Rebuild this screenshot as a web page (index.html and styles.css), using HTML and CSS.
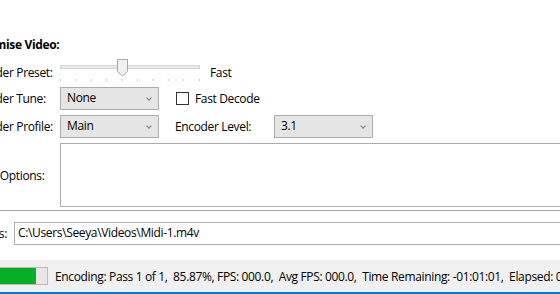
FILE: index.html
```html
<!DOCTYPE html>
<html lang="en">
<head>
   <meta charset="UTF-8">
   <meta name="viewport" content="width=device-width, initial-scale=1.0">
   <title>Video Encoder</title>
   <link rel="stylesheet" href="styles.css">
</head>
<body>
   <div class="window">
       <div class="panel">
           <h2 class="section-title">Optimise Video:</h2>

           <div class="row row-slider">
               <label class="field-label">Encoder Preset:</label>
               <svg class="slider" width="150" height="25" viewBox="0 0 150 25">
                   <rect x="0.5" y="7.5" width="139" height="3" fill="#e7eaea" stroke="#d6d6d6"/>
                   <g stroke="#c4c4c4">
                       <line x1="0.5" y1="21" x2="0.5" y2="23"/>
                       <line x1="15.9" y1="21" x2="15.9" y2="23"/>
                       <line x1="31.3" y1="21" x2="31.3" y2="23"/>
                       <line x1="46.7" y1="21" x2="46.7" y2="23"/>
                       <line x1="62.1" y1="21" x2="62.1" y2="23"/>
                       <line x1="77.5" y1="21" x2="77.5" y2="23"/>
                       <line x1="92.9" y1="21" x2="92.9" y2="23"/>
                       <line x1="108.3" y1="21" x2="108.3" y2="23"/>
                       <line x1="123.7" y1="21" x2="123.7" y2="23"/>
                       <line x1="139.5" y1="21" x2="139.5" y2="23"/>
                   </g>
                   <path d="M57.5 1.5 H67.5 V13.5 L62.5 18 L57.5 13.5 Z" fill="#f0f0f0" stroke="#a8a8a8"/>
               </svg>
               <span class="slider-value">Fast</span>
           </div>

           <div class="row">
               <label class="field-label">Encoder Tune:</label>
               <div class="combo">None</div>
               <label class="check">
                   <span class="check-box"></span>
                   Fast Decode
               </label>
           </div>

           <div class="row">
               <label class="field-label">Encoder Profile:</label>
               <div class="combo">Main</div>
               <label class="inline-label">Encoder Level:</label>
               <div class="combo">3.1</div>
           </div>

           <div class="row row-options">
               <label class="field-label">Extra Options:</label>
               <div class="textarea"></div>
           </div>
       </div>

       <div class="destination">
           <label class="dest-label">Save As:</label>
           <div class="textbox">C:\Users\Seeya\Videos\Midi-1.m4v</div>
       </div>

       <div class="status-bar">
           <div class="progress"><div class="progress-fill"></div></div>
           <span class="status-text">Encoding: Pass 1 of 1,&nbsp; 85.87%, FPS: 000.0,&nbsp; Avg FPS: 000.0,&nbsp; Time Remaining: -01:01:01,&nbsp; Elapsed: 00:00:01</span>
       </div>
   </div>
</body>
</html>
```

FILE: styles.css
```css
* {
    margin: 0;
    padding: 0;
    box-sizing: border-box;
}

body {
    font-family: "Open Sans", "Noto Sans", sans-serif;
    font-size: 12px;
    letter-spacing: -0.35px;
    color: #000;
    background: #fff;
    width: 560px;
    height: 294px;
    overflow: hidden;
}

.window {
    width: 620px;
    margin-left: -30px;
}

.panel {
    height: 211px;
    padding-top: 37px;
    border-bottom: 1px solid #a0a0a0;
    margin-left: 30px;
}

.section-title {
    font-size: 12px;
    font-weight: 700;
    line-height: 16px;
    margin-left: -30px;
    margin-bottom: 5px;
}

.row {
    display: flex;
    align-items: center;
    height: 23px;
    margin-left: -30px;
    margin-bottom: 5px;
}

.row-slider {
    height: 25px;
    margin-bottom: 4px;
    align-items: flex-start;
}

.row-slider .field-label,
.row-slider .slider-value {
    margin-top: 6px;
}

.field-label {
    width: 90px;
    flex-shrink: 0;
}

.slider {
    display: block;
}

.combo {
    width: 99px;
    height: 23px;
    padding: 2px 6px;
    background: #e5e5e5;
    border: 1px solid #acacac;
    line-height: 16px;
    position: relative;
}

.combo::after {
    content: "";
    position: absolute;
    right: 7px;
    top: 8px;
    width: 3px;
    height: 3px;
    border-right: 1px solid #808080;
    border-bottom: 1px solid #808080;
    transform: rotate(45deg);
}

.check {
    display: flex;
    align-items: center;
    margin-left: 17px;
    gap: 6px;
}

.check-box {
    width: 13px;
    height: 13px;
    border: 1px solid #333;
    background: #fff;
}

.inline-label {
    margin-left: 16px;
    width: 99px;
}

.row-options {
    height: 64px;
}

.row-options .textarea {
    flex: 1;
    height: 64px;
    border: 1px solid #abadb3;
    border-right: none;
}

.destination {
    display: flex;
    align-items: center;
    margin-top: 11px;
    margin-left: -20px;
    height: 23px;
}

.dest-label {
    width: 64px;
    flex-shrink: 0;
    text-align: right;
    padding-right: 7px;
    white-space: nowrap;
}

.textbox {
    flex: 1;
    height: 23px;
    padding: 2px 3px;
    border: 1px solid #abadb3;
    border-right: none;
    line-height: 16px;
}

.status-bar {
    display: flex;
    align-items: center;
    margin-top: 15px;
    margin-left: 30px;
    height: 34px;
    background: #f0f0f0;
    border-bottom: 2px solid #0078d7;
    white-space: nowrap;
    overflow: hidden;
}

.progress {
    width: 49px;
    height: 18px;
    margin-left: -1px;
    flex-shrink: 0;
    background: #e6e6e6;
    border: 1px solid #bcbcbc;
}

.progress-fill {
    width: 36px;
    height: 100%;
    background: #06b025;
}

.status-text {
    margin-left: 7px;
}
```
